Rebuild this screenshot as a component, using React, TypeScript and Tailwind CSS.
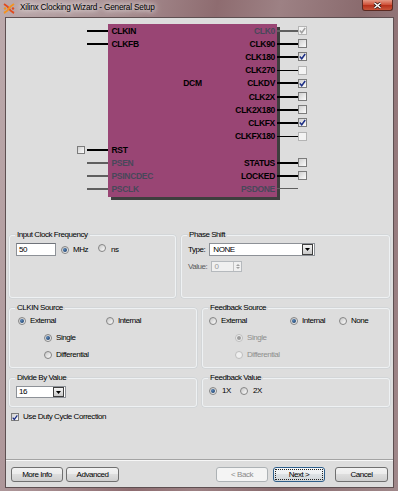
import React from "react";

type BoxProps = { checked?: boolean; disabled?: boolean; className?: string };

function Box({ checked, disabled, className }: BoxProps) {
  return (
    <span
      className={`inline-flex shrink-0 items-center justify-center border ${
        disabled
          ? "border-[#b4b4b4] bg-[#f3f3f3]"
          : "border-[#7b7b7b] bg-[linear-gradient(135deg,#cfcfcf,#fcfcfc)]"
      } ${className ?? ""}`}
    >
      {checked && (
        <svg width="7" height="7" viewBox="0 0 7 7">
          <path
            d="M0.8 3.6 L2.7 5.7 L6.2 1"
            fill="none"
            stroke={disabled ? "#a0a0a0" : "#1c2e86"}
            strokeWidth="1.5"
          />
        </svg>
      )}
    </span>
  );
}

function Radio({ checked, disabled }: { checked?: boolean; disabled?: boolean }) {
  return (
    <span
      className={`inline-flex shrink-0 items-center justify-center w-[8px] h-[8px] rounded-full border ${
        disabled
          ? "border-[#bdbdbd] bg-[#efefef]"
          : "border-[#858585] bg-[linear-gradient(135deg,#c6c6c6,#fdfdfd)]"
      }`}
    >
      {checked && (
        <span
          className={`w-[4px] h-[4px] rounded-full ${
            disabled ? "bg-[#9c9c9c]" : "bg-[radial-gradient(circle_at_35%_35%,#5a86b8,#10325c)]"
          }`}
        />
      )}
    </span>
  );
}

function DropBtn() {
  return (
    <span className="flex h-full w-[11px] shrink-0 items-center justify-center border border-[#3f3f3f] bg-[linear-gradient(#f4f4f4,#c9c9c9)]">
      <svg width="5" height="3" viewBox="0 0 5 3">
        <path d="M0 0 H5 L2.5 3 Z" fill="#000" />
      </svg>
    </span>
  );
}

function LeftPin({ label, dim, cb }: { label: string; dim?: boolean; cb?: boolean }) {
  return (
    <div className={`flex h-[13px] items-center ${cb ? "-ml-[31px]" : "-ml-[21px]"}`}>
      {cb && <Box className="mr-[2px] h-[8px] w-[8px]" />}
      <span className={`h-[2px] w-[21px] shrink-0 ${dim ? "bg-[#5f5f5f]" : "bg-black"}`} />
      <span className={`ml-[3.5px] whitespace-nowrap ${dim ? "text-[#48485a]" : "text-black"}`}>{label}</span>
    </div>
  );
}

function RightPin({
  label,
  tall,
  dim,
  thin,
  cb,
  checked,
  cbDim,
}: {
  label: string;
  tall?: boolean;
  dim?: boolean;
  thin?: boolean;
  cb?: boolean;
  checked?: boolean;
  cbDim?: boolean;
}) {
  return (
    <div className={`flex items-center justify-end -mr-[30px] ${tall ? "h-[13.2px]" : "h-[13px]"}`}>
      <span className={`whitespace-nowrap ${dim ? "text-[#48485a]" : "text-black"}`}>{label}</span>
      <span
        className={`ml-[2px] w-[21px] shrink-0 ${thin ? "h-[1px]" : "h-[2px]"} ${
          dim ? "bg-[#5f5f5f]" : "bg-black"
        }`}
      />
      {cb ? <Box className="h-[9px] w-[9px]" checked={checked} disabled={cbDim} /> : <span className="w-[9px]" />}
    </div>
  );
}

function Legend({ children }: { children: React.ReactNode }) {
  return <legend className="ml-[5px] px-[2px] text-[8px] leading-[10px]">{children}</legend>;
}

function Btn({
  children,
  w,
  kind,
}: {
  children: React.ReactNode;
  w: string;
  kind?: "disabled" | "default";
}) {
  if (kind === "disabled") {
    return (
      <div className={`flex h-[15px] items-center justify-center rounded-[3px] border border-[#adb2b5] bg-[#f4f4f4] text-[#8a8a8a] ${w}`}>
        {children}
      </div>
    );
  }
  if (kind === "default") {
    return (
      <div className={`h-[15px] rounded-[3px] border border-[#2f5f8a] bg-[linear-gradient(#f4f6f7_0%,#eceff1_50%,#dde2e5_50%,#d2d7da_100%)] p-[1px] ${w}`}>
        <div className="flex h-full w-full items-center justify-center border border-dotted border-[#222]">{children}</div>
      </div>
    );
  }
  return (
    <div
      className={`flex h-[15px] items-center justify-center rounded-[3px] border border-[#707070] bg-[linear-gradient(#f2f2f2_0%,#ebebeb_50%,#dddddd_50%,#cfcfcf_100%)] ${w}`}
    >
      {children}
    </div>
  );
}

const groupBox = "rounded-[3px] border border-[#eef1f3] shadow-[0_0_0_0.5px_#c9d0d4]";

export default function App() {
  return (
    <div className="flex h-[491px] w-[398px] flex-col overflow-hidden bg-[linear-gradient(100deg,#bcaaac_0%,#a88f92_25%,#8e6c70_45%,#9d8184_58%,#8a6b6e_75%,#a0888a_100%)] font-['Liberation_Sans',Arial,sans-serif] text-[8px] leading-[10px] tracking-[-0.45px] text-black">
      {/* Title bar */}
      <div className="flex h-[17px] shrink-0 items-start">
        <svg className="ml-[3px] mt-[3px]" width="12" height="11" viewBox="0 0 12 11">
          <path d="M1 1 Q5 3.5 6 5.5 Q7 8 11 10" stroke="#e14a1e" strokeWidth="2" fill="none" />
          <path d="M11 1 Q7 3.5 6 5.5 Q5 8 1 10" stroke="#f39320" strokeWidth="2" fill="none" />
          <circle cx="2" cy="5.5" r="1.2" fill="#f39320" />
          <circle cx="10" cy="5.5" r="1.2" fill="#e14a1e" />
        </svg>
        <span className="ml-[5px] mt-[3px] text-[8.25px] leading-[10px] tracking-[-0.2px] [text-shadow:0_0_5px_#ffffff,0_0_8px_#ffffff]">
          Xilinx Clocking Wizard - General Setup
        </span>
        <div className="flex-1" />
        <div className="mr-[5px] flex h-[11px] w-[31px] items-center justify-center rounded-b-[3px] border border-t-0 border-[#5b2a22] bg-[linear-gradient(#e59a86_0%,#d0553d_45%,#b8321c_55%,#c9553a_100%)]">
          <svg width="9" height="7" viewBox="0 0 9 7">
            <path d="M1.5 1 L7.5 6 M7.5 1 L1.5 6" stroke="#3a1a14" strokeWidth="3" />
            <path d="M1.5 1 L7.5 6 M7.5 1 L1.5 6" stroke="#ffffff" strokeWidth="1.5" />
          </svg>
        </div>
      </div>

      {/* Client area */}
      <div className="ml-[5px] flex h-[471px] w-[389px] flex-col border border-[#5e4f51] bg-[#dddddd]">
        {/* Diagram */}
        <div className="shrink-0 pl-[102px] pt-[6px]">
          <div className="grid h-[173px] w-[169px] grid-cols-[1fr_auto_1fr] bg-[#994574] shadow-[3px_3px_0_#3e3e3e] text-[8.5px] font-bold leading-[10px] tracking-[-0.3px]">
            <div className="flex flex-col justify-between pb-[2px]">
              <div>
                <LeftPin label="CLKIN" />
                <LeftPin label="CLKFB" />
              </div>
              <div>
                <LeftPin label="RST" cb />
                <LeftPin label="PSEN" dim />
                <LeftPin label="PSINCDEC" dim />
                <LeftPin label="PSCLK" dim />
              </div>
            </div>
            <div className="pt-[54px] text-center">DCM</div>
            <div className="flex flex-col justify-between pb-[2px]">
              <div>
                <RightPin label="CLK0" tall dim cb checked cbDim />
                <RightPin label="CLK90" tall cb />
                <RightPin label="CLK180" tall cb checked />
                <RightPin label="CLK270" tall thin cb cbDim />
                <RightPin label="CLKDV" tall cb checked />
                <RightPin label="CLK2X" tall cb />
                <RightPin label="CLK2X180" tall cb />
                <RightPin label="CLKFX" tall cb checked />
                <RightPin label="CLKFX180" tall thin cb cbDim />
              </div>
              <div>
                <RightPin label="STATUS" cb />
                <RightPin label="LOCKED" cb />
                <RightPin label="PSDONE" dim thin />
              </div>
            </div>
          </div>
        </div>

        {/* Row 1 */}
        <div className="mt-[33px] flex shrink-0 gap-[5px] pl-[3px]">
          <fieldset className={`h-[68px] w-[167px] ${groupBox}`}>
            <Legend>Input Clock Frequency</Legend>
            <div className="flex items-center pl-[6px] pt-[3px]">
              <div className="flex h-[13px] w-[40px] items-center border border-[#8d9197] border-t-[#6f737a] bg-white pl-[2px]">50</div>
              <span className="ml-[5px]"><Radio checked /></span>
              <span className="ml-[4px]">MHz</span>
              <span className="ml-[10px]"><Radio /></span>
              <span className="ml-[5px]">ns</span>
            </div>
          </fieldset>
          <fieldset className={`h-[68px] w-[209px] ${groupBox}`}>
            <Legend>Phase Shift</Legend>
            <div className="pl-[6px] pt-[3px]">
              <div className="flex items-center">
                <span>Type:</span>
                <div className="ml-[4px] flex h-[13px] w-[106px] items-center border border-[#8d9197] bg-white pr-[1px]">
                  <span className="flex-1 pl-[3px]">NONE</span>
                  <span className="h-[11px]"><DropBtn /></span>
                </div>
              </div>
              <div className="mt-[5px] flex items-center">
                <span className="text-[#5a5a5a]">Value:</span>
                <div className="ml-[4px] flex h-[11px] w-[31px] items-center border border-[#b5b9bd] bg-[#f0f0f0]">
                  <span className="flex-1 pl-[2px] text-[#9a9a9a]">0</span>
                  <span className="flex h-full w-[8px] flex-col items-center justify-center gap-[1px] border-l border-[#c4c4c4]">
                    <svg width="4" height="2" viewBox="0 0 4 2"><path d="M0 2 L2 0 L4 2Z" fill="#a0a0a0" /></svg>
                    <svg width="4" height="2" viewBox="0 0 4 2"><path d="M0 0 L4 0 L2 2Z" fill="#a0a0a0" /></svg>
                  </span>
                </div>
              </div>
            </div>
          </fieldset>
        </div>

        {/* Row 2 */}
        <div className="mt-[5px] flex shrink-0 gap-[5px] pl-[3px]">
          <fieldset className={`h-[65px] w-[188px] ${groupBox}`}>
            <Legend>CLKIN Source</Legend>
            <div className="pl-[8px]">
              <div className="flex h-[16px] items-center">
                <div className="flex w-[88px] items-center">
                  <Radio checked />
                  <span className="ml-[4px]">External</span>
                </div>
                <Radio />
                <span className="ml-[4px]">Internal</span>
              </div>
              <div className="flex h-[17px] items-center pl-[26px]">
                <Radio checked />
                <span className="ml-[4px]">Single</span>
              </div>
              <div className="flex h-[17px] items-center pl-[26px]">
                <Radio />
                <span className="ml-[4px]">Differential</span>
              </div>
            </div>
          </fieldset>
          <fieldset className={`h-[65px] w-[188px] ${groupBox}`}>
            <Legend>Feedback Source</Legend>
            <div className="pl-[6px]">
              <div className="flex h-[16px] items-center">
                <div className="flex w-[81px] items-center">
                  <Radio />
                  <span className="ml-[4px]">External</span>
                </div>
                <div className="flex w-[49px] items-center">
                  <Radio checked />
                  <span className="ml-[4px]">Internal</span>
                </div>
                <Radio />
                <span className="ml-[4px]">None</span>
              </div>
              <div className="flex h-[17px] items-center pl-[26px] text-[#8e8e8e]">
                <Radio checked disabled />
                <span className="ml-[4px]">Single</span>
              </div>
              <div className="flex h-[17px] items-center pl-[26px] text-[#8e8e8e]">
                <Radio disabled />
                <span className="ml-[4px]">Differential</span>
              </div>
            </div>
          </fieldset>
        </div>

        {/* Row 3 */}
        <div className="mt-[5px] flex shrink-0 gap-[5px] pl-[3px]">
          <fieldset className={`h-[34px] w-[188px] ${groupBox}`}>
            <Legend>Divide By Value</Legend>
            <div className="pl-[6px] pt-[3px]">
              <div className="flex h-[12px] w-[50px] items-center border border-[#8d9197] bg-white pr-[1px]">
                <span className="flex-1 pl-[2px]">16</span>
                <span className="h-[10px]"><DropBtn /></span>
              </div>
            </div>
          </fieldset>
          <fieldset className={`h-[34px] w-[188px] ${groupBox}`}>
            <Legend>Feedback Value</Legend>
            <div className="flex h-[16px] items-center pl-[6px]">
              <div className="flex w-[31px] items-center">
                <Radio checked />
                <span className="ml-[5px]">1X</span>
              </div>
              <Radio />
              <span className="ml-[5px]">2X</span>
            </div>
          </fieldset>
        </div>

        {/* Duty cycle */}
        <div className="mt-[4px] flex h-[12px] shrink-0 items-center pl-[5px]">
          <Box className="h-[8px] w-[8px]" checked />
          <span className="ml-[4px]">Use Duty Cycle Correction</span>
        </div>

        <div className="flex-1" />

        {/* Separator */}
        <div className="h-[2px] shrink-0 border-t border-b border-t-[#a3a3a3] border-b-[#f7f7f7]" />

        {/* Buttons */}
        <div className="mb-[5px] mt-[6px] flex shrink-0 items-center px-[5px]">
          <Btn w="w-[52px]">More Info</Btn>
          <div className="ml-[3px]">
            <Btn w="w-[53px]">Advanced</Btn>
          </div>
          <div className="flex-1" />
          <Btn w="w-[52px]" kind="disabled">&lt; Back</Btn>
          <div className="ml-[5px]">
            <Btn w="w-[52px]" kind="default">Next &gt;</Btn>
          </div>
          <div className="ml-[10px]">
            <Btn w="w-[53px]">Cancel</Btn>
          </div>
        </div>
      </div>
    </div>
  );
}
